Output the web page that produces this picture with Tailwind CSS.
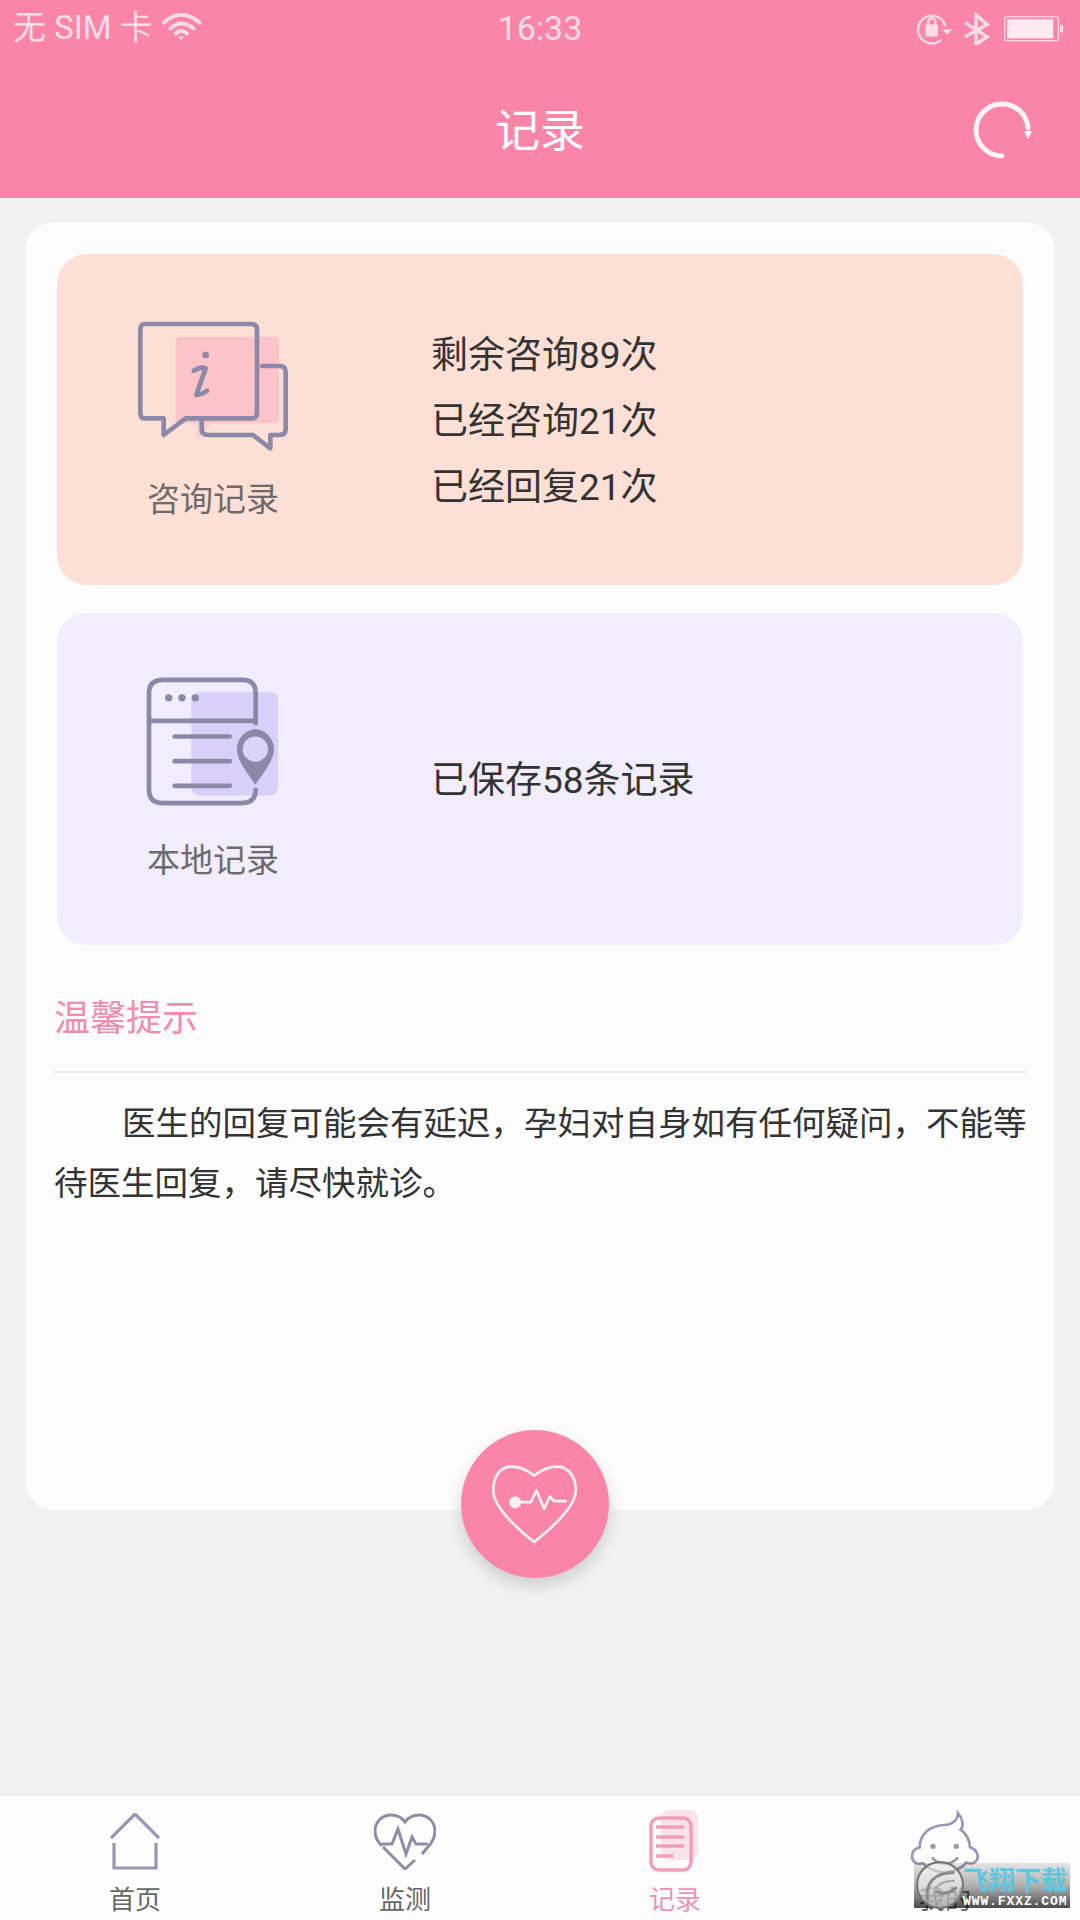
<!DOCTYPE html>
<html lang="zh-CN">
<head>
  <meta charset="utf-8" />
  <title>记录</title>
  <script src="https://cdn.jsdelivr.net/npm/@tailwindcss/browser@4"></script>
</head>
<body class="font-[Roboto,'Noto_Sans_CJK_SC',sans-serif]">
  <div class="relative flex h-[1920px] w-[1080px] flex-col overflow-hidden bg-[#f2f2f2]">

    <!-- Header with status bar -->
    <header class="h-[198px] bg-[#fb85a8]">
      <div class="grid h-[60px] grid-cols-3 items-center pb-[4px] text-[#ffdde6]">
        <div class="flex items-center pl-[13px] text-[33px]">
          <span>无 SIM 卡</span>
          <svg class="ml-[8px] -mt-[4px]" width="42" height="32" viewBox="470 30 125 95" fill="none" stroke="#ffdde6" stroke-width="11" stroke-linecap="round">
            <path d="M478 68Q530 20 585 68" />
            <path d="M498 85Q530 55 567 85" />
            <path d="M513 100Q530 85 548 100" />
            <path d="M520 108H540L530 120Z" fill="#ffdde6" stroke="none" />
          </svg>
        </div>
        <div class="text-center text-[34px]">16:33</div>
        <div class="flex justify-end pr-[16px]">
          <svg width="148" height="33" viewBox="48 30 445 100" fill="none" stroke="#ffdde6" stroke-width="7">
            <path d="M135 72A42 42 0 1 0 122 115" />
            <path d="M125 82H157L141 98Z" fill="#ffdde6" stroke="none" />
            <rect x="75" y="68" width="38" height="36" rx="3" fill="#ffdde6" stroke="none" />
            <path d="M83 70V60A11 11 0 0 1 105 60V70" />
            <path d="M195 62L262 105L228 128V38L262 68L195 105" stroke-width="10" />
            <rect x="315" y="45" width="163" height="72" rx="5" stroke-width="4" />
            <rect x="322" y="52" width="140" height="58" fill="#fdeaf0" stroke="none" />
            <rect x="483" y="70" width="9" height="22" fill="#ffdde6" stroke="none" />
          </svg>
        </div>
      </div>
      <div class="relative flex h-[138px] items-center justify-center pt-[4px]">
        <h1 class="text-[45px] leading-none font-normal text-white">记录</h1>
        <svg class="absolute top-[40px] right-[48px]" width="60" height="60" viewBox="0 0 60 60" fill="none">
          <path d="M30 56A26 26 0 1 1 56 28" stroke="#fff" stroke-opacity="0.9" stroke-width="5" stroke-linecap="round" />
          <path d="M52 31H60L56 39Z" fill="#fff" />
        </svg>
      </div>
    </header>

    <!-- Main card -->
    <main class="relative mx-[25px] mt-[24px] h-[1288px] rounded-[30px] bg-[#fcfcfc] px-[32px] pt-[32px]">
      <section class="flex h-[331px] rounded-[30px] bg-[#fde0d5]">
        <div class="flex w-[312px] flex-col items-center pt-[66px]">
          <svg width="160" height="140" viewBox="100 60 480 420" fill="none" stroke="#8c88a8" stroke-width="14" stroke-linejoin="round" stroke-linecap="round">
            <rect x="228" y="110" width="310" height="260" rx="12" fill="#fcc4c8" stroke="none" />
            <path d="M290 370H340L290 420Z" fill="#fcd0cf" stroke="none" />
            <path d="M135 72H455Q472 72 472 89V338Q472 355 455 355H258L192 405V355H135Q122 355 122 338V89Q122 72 135 72Z" />
            <path d="M488 198H540Q558 198 558 216V388Q558 405 540 405H512V445L460 405H325Q306 405 306 388V362" />
            <circle cx="318" cy="165" r="10" fill="#8c88a8" stroke="none" />
            <path d="M282 212Q305 198 318 205Q305 240 290 285Q305 285 322 272" />
          </svg>
          <div class="mt-[20px] text-[33px] leading-[40px] text-[#6e6a6c]">咨询记录</div>
        </div>
        <div class="ml-[62px] flex flex-col justify-center pt-[4px] text-[37px] leading-[66px] text-[#333]">
          <p>剩余咨询89次</p>
          <p>已经咨询21次</p>
          <p>已经回复21次</p>
        </div>
      </section>

      <section class="mt-[28px] flex h-[332px] rounded-[30px] bg-[#f1edfc]">
        <div class="flex w-[312px] flex-col items-center pt-[60px]">
          <svg width="140" height="137" viewBox="70 40 420 410" fill="none" stroke="#8c88a8" stroke-width="14" stroke-linecap="round">
            <rect x="215" y="97" width="260" height="310" rx="22" fill="#d9d0fa" stroke="none" />
            <path d="M408 190V100Q408 60 368 60H130Q88 60 88 100V390Q88 430 130 430H365Q408 430 408 390" />
            <path d="M90 183H408" />
            <circle cx="147" cy="114" r="11" fill="#8c88a8" stroke="none" />
            <circle cx="187" cy="114" r="11" fill="#8c88a8" stroke="none" />
            <circle cx="227" cy="114" r="11" fill="#8c88a8" stroke="none" />
            <path d="M165 230H330M165 304H330M165 378H330" />
            <path d="M407 375C380 335 352 300 352 268C352 236 378 208 407 208C436 208 463 236 463 268C463 300 434 335 407 375Z" fill="#8c88a8" stroke="none" />
            <circle cx="407" cy="268" r="38" fill="#dcd3f8" stroke="none" />
          </svg>
          <div class="mt-[31px] text-[33px] leading-[40px] text-[#6e6a6c]">本地记录</div>
        </div>
        <div class="ml-[62px] flex items-center pt-[4px] text-[37px] text-[#333]">已保存58条记录</div>
      </section>

      <h2 class="mt-[51px] -ml-[3px] text-[36px] leading-[46px] font-normal text-[#f08cb0]">温馨提示</h2>
      <div class="mt-[29px] -ml-[3px] h-[2px] w-[972px] bg-[#eeeeee]"></div>
      <p class="-ml-[3px] w-[976px] pt-[21px] indent-[68px] text-[33.5px] leading-[60px] text-[#333]">医生的回复可能会有延迟，孕妇对自身如有任何疑问，不能等待医生回复，请尽快就诊。</p>

      <!-- Floating heart button -->
      <button class="absolute bottom-[-68px] left-[436px] size-[148px] rounded-full bg-[#fb85a8] shadow-[0_8px_16px_rgba(0,0,0,0.15)]">
        <svg width="148" height="148" viewBox="95 88 445 445" fill="none" stroke="#fff2f6" stroke-width="8" stroke-linejoin="round" stroke-linecap="round">
          <path d="M315 225C290 205 265 198 245 198C215 198 192 225 192 270C192 310 240 365 315 425C390 365 440 310 440 270C440 225 415 198 385 198C365 198 340 205 315 225Z" />
          <circle cx="258" cy="305" r="18" fill="#fff2f6" stroke="none" />
          <path d="M258 305H305L322 270L345 325L362 288L375 302H410" />
        </svg>
      </button>
    </main>

    <!-- Tab bar -->
    <nav class="absolute bottom-0 left-0 grid h-[126px] w-full grid-cols-4 border-t-2 border-[#ececec] bg-[#fdfdfd] pt-[12px] text-[26px] leading-[32px] text-[#666]">
      <a class="flex flex-col items-center">
        <div class="flex h-[66px] items-center">
          <svg width="50" height="57" viewBox="0 0 50 57" fill="none" stroke="#9a98b0" stroke-width="3.2">
            <path d="M1 25L25 1L49 25" />
            <path d="M4 30V55H46V30" />
          </svg>
        </div>
        <span class="mt-[10px]">首页</span>
      </a>
      <a class="flex flex-col items-center">
        <div class="flex h-[66px] items-center">
          <svg width="62" height="57" viewBox="0 0 62 57" fill="none" stroke="#8f8da6" stroke-width="3">
            <path d="M8 33C3 28 1 23 1 18C1 8 9 2 17 2C23 2 28 5 31 9C34 5 39 2 45 2C53 2 61 8 61 18C61 24 58 30 53 35L48 41" />
            <path d="M9 34L31 56L41 47" />
            <path d="M8 31H18L24 16L32 41L38 24L42 31H54" />
          </svg>
        </div>
        <span class="mt-[10px]">监测</span>
      </a>
      <a class="flex flex-col items-center">
        <div class="flex h-[66px] items-center">
          <svg width="52" height="62" viewBox="0 0 52 62" fill="none" stroke="#f19ebb" stroke-width="3.5">
            <rect x="12" y="0" width="37" height="50" rx="8" fill="#fbe3ec" stroke="none" />
            <rect x="2" y="8" width="40" height="52" rx="8" />
            <path d="M7 17H35M7 27H35M7 36H35M7 46H24" />
          </svg>
        </div>
        <span class="mt-[10px] text-[#ee93b5]">记录</span>
      </a>
      <a class="flex flex-col items-center">
        <div class="flex h-[66px] items-center">
          <svg width="75" height="65" viewBox="40 10 225 195" fill="none" stroke="#9a98b0" stroke-width="8">
            <path d="M75 125C75 85 105 60 150 58C170 57 190 45 190 22C205 40 208 60 198 72C215 85 225 105 226 125C245 130 255 150 245 165C238 175 225 175 215 170C200 190 170 200 150 200C130 200 100 190 85 172C70 178 55 172 52 155C50 140 60 128 75 125Z" />
            <circle cx="115" cy="122" r="8" fill="#9a98b0" stroke="none" />
            <circle cx="185" cy="122" r="8" fill="#9a98b0" stroke="none" />
            <path d="M112 155C130 180 170 180 190 155" />
          </svg>
        </div>
        <span class="mt-[10px]">我的</span>
      </a>
    </nav>

    <!-- Watermark over the tab bar -->
    <div class="absolute top-[1863px] left-[914px] h-[45px] w-[156px] bg-linear-to-b from-black/10 via-black/30 to-black/70">
      <svg class="absolute top-[-3px] left-[1px]" width="50" height="50" viewBox="0 0 48 48" fill="none" stroke="#eeeeee" stroke-width="2">
        <circle cx="24" cy="24" r="22" fill="#ffffff" fill-opacity="0.55" stroke="#777777" />
        <path d="M12 38C10 22 18 12 38 12" stroke="#8a8a8a" stroke-width="3" />
        <path d="M18 36C18 26 24 20 38 20" stroke="#aaaaaa" />
        <path d="M20 30C26 34 34 32 40 26" stroke="#8a8a8a" stroke-width="3" />
      </svg>
      <div class="absolute top-[4px] left-[49px] text-[26px] leading-[28px] font-bold whitespace-nowrap text-[#5cc8e0]">飞翔下载</div>
      <div class="absolute top-[32px] left-[49px] font-['Liberation_Mono',monospace] text-[13px] leading-[13px] font-bold tracking-[0.9px] whitespace-nowrap text-white">WWW.FXXZ.COM</div>
    </div>
  </div>
</body>
</html>
